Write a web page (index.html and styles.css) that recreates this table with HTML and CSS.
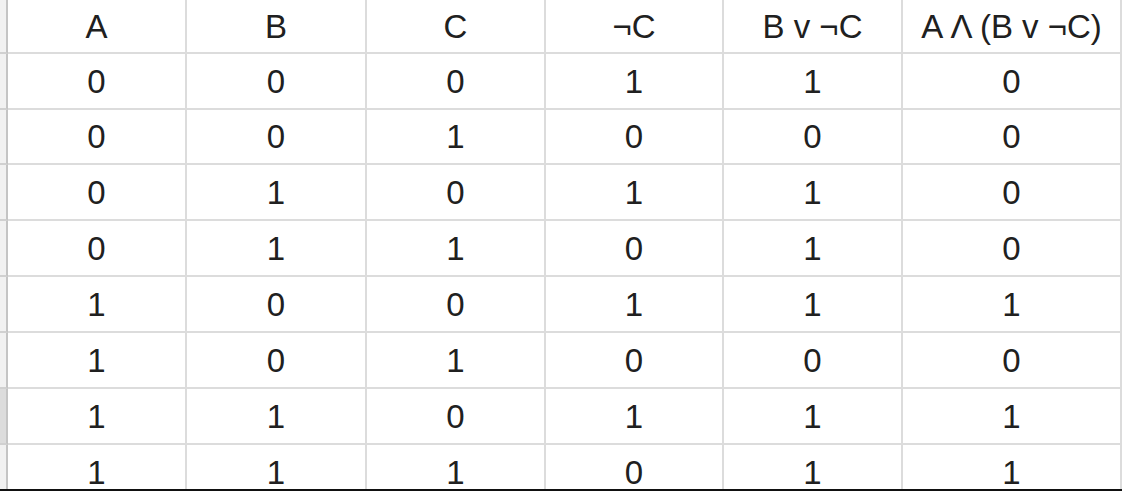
FILE: index.html
```html
<!DOCTYPE html>
<html>
<head>
<meta charset="utf-8">
<link rel="stylesheet" href="styles.css">
</head>
<body>
<div class="sheet">
  <div class="grid">
    <div class="rh"></div><div class="c">A</div><div class="c">B</div><div class="c">C</div><div class="c">¬C</div><div class="c">B v ¬C</div><div class="c">A Λ (B v ¬C)</div>
    <div class="rh"></div><div class="c">0</div><div class="c">0</div><div class="c">0</div><div class="c">1</div><div class="c">1</div><div class="c">0</div>
    <div class="rh"></div><div class="c">0</div><div class="c">0</div><div class="c">1</div><div class="c">0</div><div class="c">0</div><div class="c">0</div>
    <div class="rh"></div><div class="c">0</div><div class="c">1</div><div class="c">0</div><div class="c">1</div><div class="c">1</div><div class="c">0</div>
    <div class="rh"></div><div class="c">0</div><div class="c">1</div><div class="c">1</div><div class="c">0</div><div class="c">1</div><div class="c">0</div>
    <div class="rh"></div><div class="c">1</div><div class="c">0</div><div class="c">0</div><div class="c">1</div><div class="c">1</div><div class="c">1</div>
    <div class="rh"></div><div class="c">1</div><div class="c">0</div><div class="c">1</div><div class="c">0</div><div class="c">0</div><div class="c">0</div>
    <div class="rh sel"></div><div class="c">1</div><div class="c">1</div><div class="c">0</div><div class="c">1</div><div class="c">1</div><div class="c">1</div>
    <div class="rh"></div><div class="c">1</div><div class="c">1</div><div class="c">1</div><div class="c">0</div><div class="c">1</div><div class="c">1</div>
  </div>
</div>
</body>
</html>
```
FILE: styles.css
```css
html, body {
  margin: 0;
  padding: 0;
  background: #ffffff;
}

.sheet {
  width: 1122px;
  height: 489px;
  overflow: hidden;
  border-bottom: 2px solid #111111;
}

.grid {
  display: grid;
  grid-template-columns: 8px 179px 180px 179px 178px 179px 1fr;
  grid-template-rows: 54px 56px 55px 56px 56px 56px 56px 56px 56px;
  font-family: "Liberation Sans", Arial, sans-serif;
  font-size: 33px;
  color: #202020;
}

.c {
  box-sizing: border-box;
  border-right: 2px solid #dcdcdc;
  border-bottom: 2px solid #dcdcdc;
  display: flex;
  align-items: center;
  justify-content: center;
  white-space: nowrap;
  padding-top: 1px;
}

.rh {
  box-sizing: border-box;
  background: #f1f1f1;
  border-right: 2px solid #c4c4c4;
  border-bottom: 2px solid #d0d0d0;
}

.rh.sel {
  background: #dcdcdc;
}
```
